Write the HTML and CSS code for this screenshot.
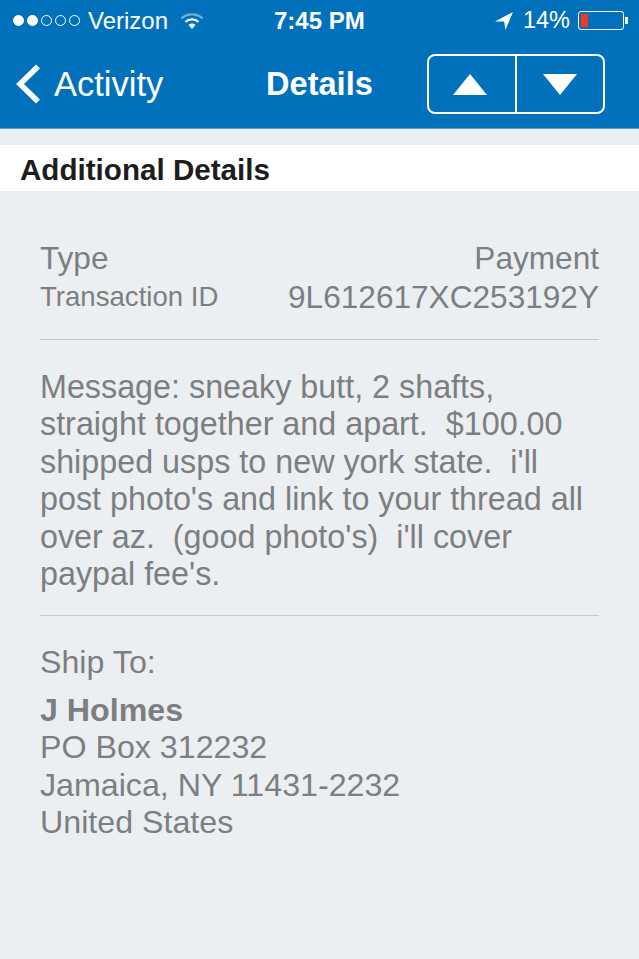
FILE: index.html
```html
<!DOCTYPE html>
<html lang="en">
<head>
  <meta charset="UTF-8">
  <title>Details</title>
  <link rel="stylesheet" href="styles.css">
</head>
<body>

<header class="topbar">
  <div class="status">
    <div class="status-left">
      <span class="dot on"></span><span class="dot on"></span><span class="dot"></span><span class="dot"></span><span class="dot"></span>
      <span class="carrier">Verizon</span>
      <svg class="wifi" width="24" height="18" viewBox="0 0 24 18">
        <path d="M1.5 6.5C7 1 17 1 22.5 6.5" fill="none" stroke="#6db3e2" stroke-width="2.4"/>
        <path d="M5.5 10C9 6.5 15 6.5 18.5 10" fill="none" stroke="#fff" stroke-width="2.4"/>
        <path d="M8.6 13C10.5 11 13.5 11 15.4 13L12 17Z" fill="#fff"/>
      </svg>
    </div>
    <div class="clock">7:45 PM</div>
    <div class="status-right">
      <svg class="arrow" width="18" height="18" viewBox="0 0 18 18">
        <path d="M18 0L0 9.5L9.2 9.6L10.4 18Z" fill="#fff"/>
      </svg>
      <span class="percent">14%</span>
      <div class="battery"><div class="battery-level"></div></div>
      <div class="battery-tip"></div>
    </div>
  </div>
  <nav class="navbar">
    <a class="back">
      <svg width="28" height="40" viewBox="0 0 28 40">
        <path d="M24 2.5L6 20L24 37.5" fill="none" stroke="#fff" stroke-width="5.5"/>
      </svg>
      <span>Activity</span>
    </a>
    <div class="title">Details</div>
    <div class="pager">
      <div class="pager-btn"><div class="tri-up"></div></div>
      <div class="pager-btn"><div class="tri-down"></div></div>
    </div>
  </nav>
</header>

<h2 class="section-head">Additional Details</h2>

<main class="content">
  <div class="row row-type">
    <span>Type</span>
    <span>Payment</span>
  </div>
  <div class="row row-id">
    <span class="small">Transaction ID</span>
    <span>9L612617XC253192Y</span>
  </div>

  <p class="message">Message: sneaky butt, 2 shafts,<br>straight together and apart.&nbsp; $100.00<br>shipped usps to new york state.&nbsp; i'll<br>post photo's and link to your thread all<br>over az.&nbsp; (good photo's)&nbsp; i'll cover<br>paypal fee's.</p>

  <div class="ship">
    <div class="ship-label">Ship To:</div>
    <div class="ship-name">J Holmes</div>
    <div>PO Box 312232</div>
    <div>Jamaica, NY 11431-2232</div>
    <div>United States</div>
  </div>
</main>

</body>
</html>
```

FILE: styles.css
```css
* {
  box-sizing: border-box;
}
html, body {
  height: 100%;
}
body {
  margin: 0;
  background: #eceff1;
  font-family: "Liberation Sans", Arial, sans-serif;
  overflow: hidden;
}
.topbar {
  height: 129px;
  background: #0271bc;
  color: #fff;
  border-bottom: 1px solid #5a9fd0;
}
.status {
  height: 41px;
  padding: 0 11px 0 13px;
  display: flex;
  align-items: center;
  justify-content: space-between;
  font-size: 24px;
  position: relative;
}
.status-left {
  display: flex;
  align-items: center;
}
.dot {
  width: 11px;
  height: 11px;
  margin-right: 3px;
  border: 1px solid #fff;
  border-radius: 50%;
}
.dot.on {
  background: #fff;
}
.carrier {
  margin-left: 5px;
}
.wifi {
  margin-left: 12px;
}
.clock {
  position: absolute;
  left: 274px;
  font-weight: bold;
  font-size: 24px;
}
.status-right {
  display: flex;
  align-items: center;
}
.percent {
  margin-left: 10px;
  font-size: 23.5px;
}
.battery {
  width: 46px;
  height: 19px;
  margin-left: 8px;
  padding: 2px;
  border: 1px solid #fff;
  border-radius: 3px;
}
.battery-level {
  width: 7px;
  height: 13px;
  background: #f03a24;
}
.battery-tip {
  width: 3px;
  height: 7px;
  margin-left: 1px;
  background: #fff;
}
.navbar {
  height: 86px;
  display: flex;
  align-items: center;
  position: relative;
  padding: 0 34px 0 14px;
  justify-content: space-between;
}
.back {
  display: flex;
  align-items: center;
  gap: 12px;
  font-size: 34.5px;
}
.title {
  position: absolute;
  left: 266px;
  font-size: 32.6px;
  font-weight: bold;
}
.pager {
  width: 178px;
  height: 60px;
  display: flex;
  border: 2px solid #fff;
  border-radius: 8px;
}
.pager-btn {
  flex: 1;
  display: flex;
  align-items: center;
  justify-content: center;
}
.pager-btn:first-child {
  flex: 0 0 88px;
  padding-right: 4px;
  border-right: 2px solid #fff;
}
.tri-up {
  border-left: 17px solid transparent;
  border-right: 17px solid transparent;
  border-bottom: 21px solid #fff;
}
.tri-down {
  border-left: 17px solid transparent;
  border-right: 17px solid transparent;
  border-top: 21px solid #fff;
}
.section-head {
  margin: 16px 0 0;
  height: 46px;
  padding-left: 20px;
  background: #fff;
  color: #1d1d1d;
  font-size: 29.6px;
  line-height: 50px;
  font-weight: bold;
}
.content {
  padding: 47px 40px 0;
  color: #7c7f81;
  font-size: 31.6px;
}
.row {
  display: flex;
  justify-content: space-between;
}
.row-type {
  line-height: 40px;
}
.row-id {
  padding-bottom: 23px;
  line-height: 38px;
  border-bottom: 1px solid #c6c8ca;
}
.small {
  font-size: 27.6px;
}
.message {
  margin: 0;
  padding: 29px 0 22px;
  font-size: 32.3px;
  line-height: 37.4px;
  border-bottom: 1px solid #c6c8ca;
}
.ship {
  padding-top: 28px;
  font-size: 32.2px;
  line-height: 37.5px;
}
.ship-label {
  margin-bottom: 10px;
}
.ship-name {
  font-weight: bold;
}
```
